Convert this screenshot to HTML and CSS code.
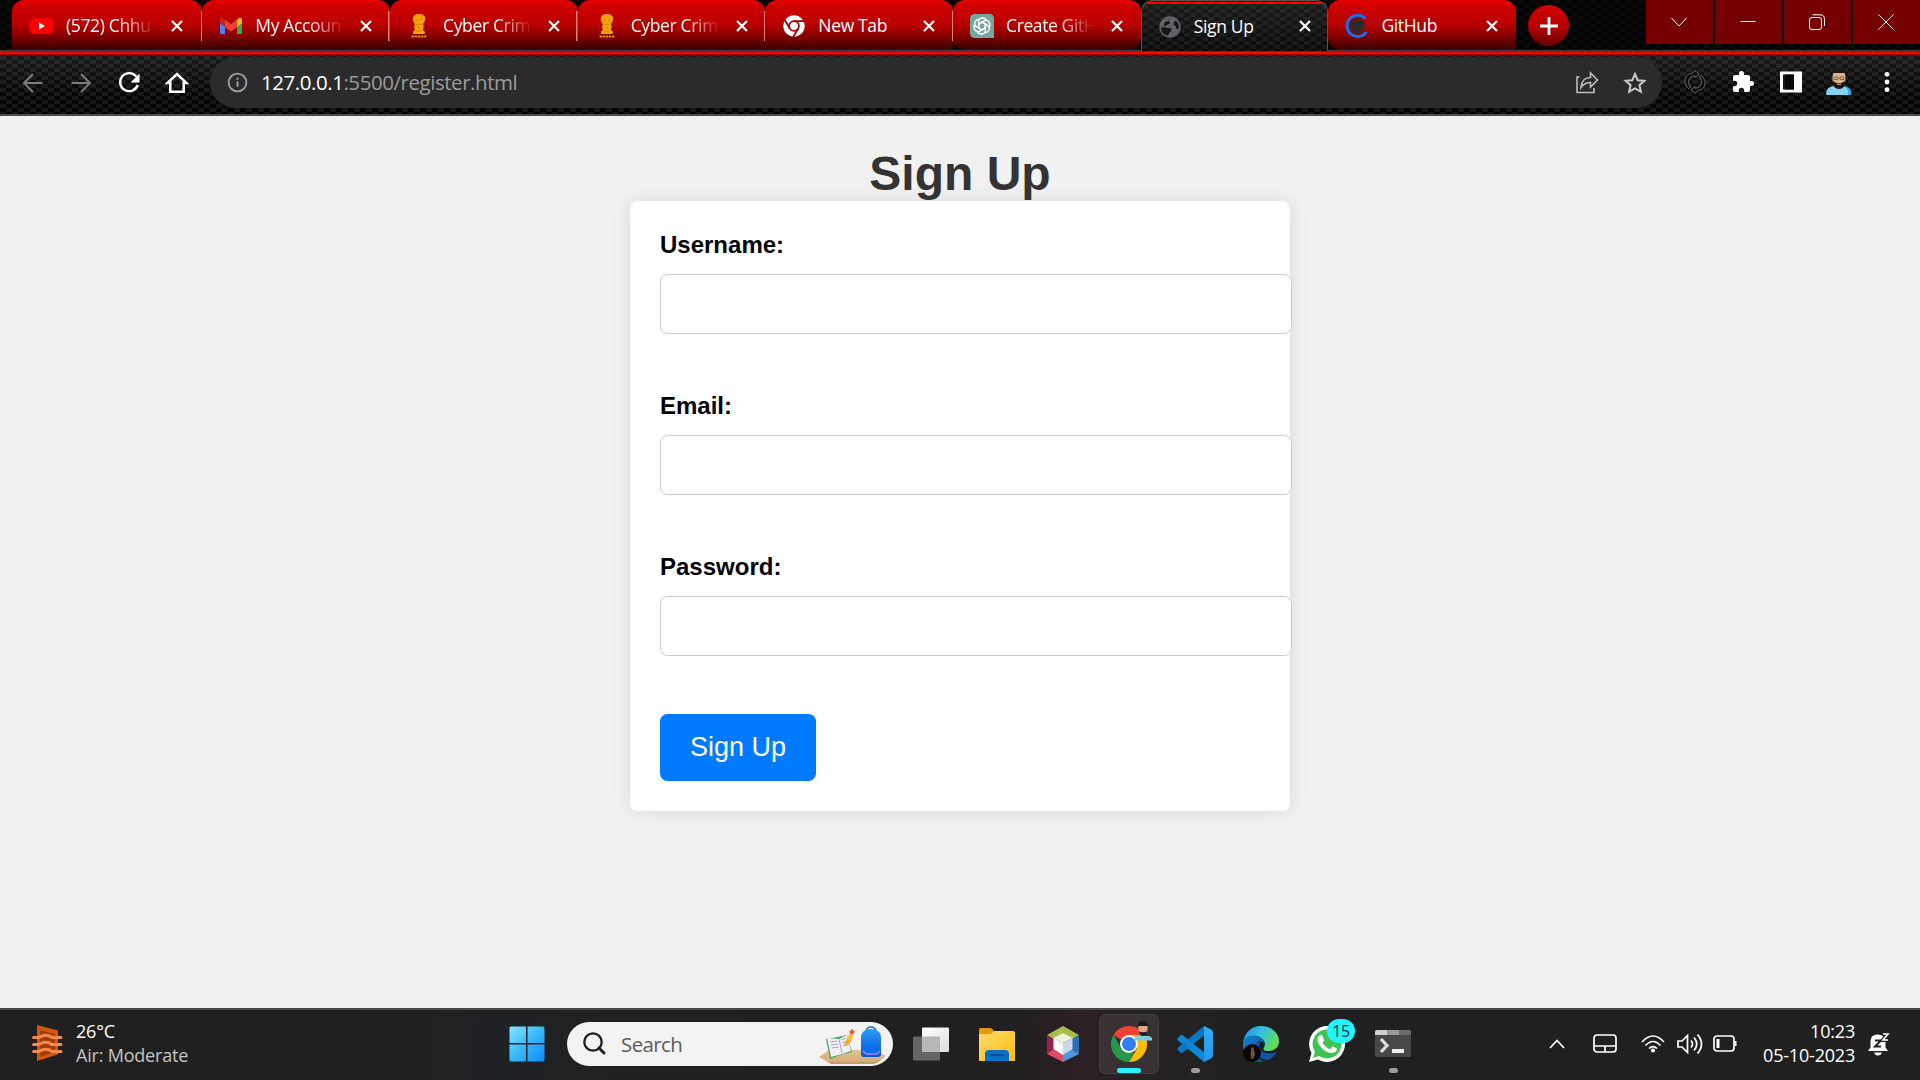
FILE: index.html
```html
<!DOCTYPE html>
<html lang="en">
<head>
<meta charset="utf-8">
<title>Sign Up</title>
<link rel="stylesheet" href="styles.css">
</head>
<body>
<svg class="defs" aria-hidden="true">
  <defs>
    <linearGradient id="win" x1="0" y1="0" x2="1" y2="1"><stop offset="0" stop-color="#8be4ff"/><stop offset=".5" stop-color="#38b8fa"/><stop offset="1" stop-color="#0a8cf8"/></linearGradient>
    <linearGradient id="folder" x1="0" y1="0" x2="1" y2="1"><stop offset="0" stop-color="#ffda6b"/><stop offset="1" stop-color="#fbbc14"/></linearGradient>
    <linearGradient id="edgeTop" x1="0" y1="0" x2="1" y2=".4"><stop offset="0" stop-color="#1a94dc"/><stop offset=".55" stop-color="#35c1e0"/><stop offset="1" stop-color="#60dc5c"/></linearGradient>
    <linearGradient id="edgeLow" x1="0" y1="0" x2="1" y2="1"><stop offset="0" stop-color="#1283d3"/><stop offset="1" stop-color="#104a9c"/></linearGradient>
    <linearGradient id="bag" x1="0" y1="0" x2="0" y2="1"><stop offset="0" stop-color="#2a9bff"/><stop offset="1" stop-color="#0753cf"/></linearGradient>
    <linearGradient id="desk" x1="0" y1="0" x2="0" y2="1"><stop offset="0" stop-color="#e6c190"/><stop offset="1" stop-color="#d5a972"/></linearGradient>
    <linearGradient id="viewFront" x1="0" y1="0" x2="1" y2="1"><stop offset="0" stop-color="#fff"/><stop offset="1" stop-color="#ddd"/></linearGradient>
    <linearGradient id="vsRight" x1="0" y1="0" x2="0" y2="1"><stop offset="0" stop-color="#35acf5"/><stop offset="1" stop-color="#1f97ea"/></linearGradient>
    <symbol id="close" viewBox="0 0 12 12"><path d="M1 1l10 10M11 1L1 11" fill="none" stroke="#fff" stroke-width="2.2"/></symbol>
    <symbol id="emblem" viewBox="0 0 16 24"><path d="M4 1c1-1.200 7-1.200 8 0 2 1 2.500 3 2 5-.3 2-1.500 3-2 4 .8 2 .8 4-.2 6l2 1.500v2.500H2v-2.500l2-1.500c-1-2-1-4-.2-6-.5-1-1.700-2-2-4C1.500 4 2 2 4 1z" fill="#f2a20d"/><path d="M5 5.500l2 1M11 5.500l-2 1M5 10.500h6M6.500 13l3 1.500M5.500 17h5" stroke="#d07a00" stroke-width=".7" fill="none"/><path d="M.5 22.500h15" stroke="#e08a0a" stroke-width="2" stroke-dasharray="2.500 .6"/></symbol>
  </defs>
</svg>

<header class="browser">
  <div class="tabstrip">
    <nav class="tabs">
      <div class="tab tab-first">
        <svg class="tab-icon" viewBox="0 0 24 24"><rect x="0" y="4" width="23" height="16" rx="4" fill="#f00"/><path d="M9 8.500v7l6-3.500z" fill="#fff"/></svg>
        <span class="tab-title fade">(572) Chhu</span><svg class="tab-close"><use href="#close"/></svg>
      </div>
      <div class="tab">
        <svg class="tab-icon" viewBox="0 0 24 24"><path d="M1 6v12.500q0 1.500 1.500 1.500H6V9z" fill="#4285f4"/><path d="M18 9v11h3.500q1.500 0 1.500-1.500V6z" fill="#34a853"/><path d="M18 5.500L20 4q3-1 3 2v3l-5 4z" fill="#fbbc04"/><path d="M6 5.500L4 4Q1 3 1 6v3l5 4z" fill="#c5221f"/><path d="M6 5.500l6 4.700 6-4.700V13l-6 4.500L6 13z" fill="#ea4335"/></svg>
        <span class="tab-title fade">My Accoun</span><svg class="tab-close"><use href="#close"/></svg>
      </div>
      <div class="tab">
        <svg class="tab-icon"><use href="#emblem"/></svg>
        <span class="tab-title fade">Cyber Crim</span><svg class="tab-close"><use href="#close"/></svg>
      </div>
      <div class="tab">
        <svg class="tab-icon"><use href="#emblem"/></svg>
        <span class="tab-title fade">Cyber Crim</span><svg class="tab-close"><use href="#close"/></svg>
      </div>
      <div class="tab">
        <svg class="tab-icon" viewBox="0 0 24 24"><circle cx="12" cy="12" r="10.700" fill="#fff"/><circle cx="12" cy="12" r="4.900" fill="none" stroke="#a00000" stroke-width="1.800"/><path d="M12 7.100h10M7.800 14.500L2.800 6M16.200 14.500l-5 8.500" stroke="#a00000" stroke-width="1.800"/></svg>
        <span class="tab-title">New Tab</span><svg class="tab-close"><use href="#close"/></svg>
      </div>
      <div class="tab tab-plain">
        <svg class="tab-icon" viewBox="0 0 24 24"><path d="M5 0h14q5 0 5 5v19H5q-5 0-5-5V5q0-5 5-5z" fill="#75a99c"/><g fill="none" stroke="#fff" stroke-width="1.400"><path id="petal" d="M12 8.200l3.400 2V16q0 4-4 4-3 0-4-2.500"/><use href="#petal" transform="rotate(60 12 12)"/><use href="#petal" transform="rotate(120 12 12)"/><use href="#petal" transform="rotate(180 12 12)"/><use href="#petal" transform="rotate(240 12 12)"/><use href="#petal" transform="rotate(300 12 12)"/></g></svg>
        <span class="tab-title fade fade-short">Create GitH</span><svg class="tab-close"><use href="#close"/></svg>
      </div>
      <div class="tab tab-active">
        <svg class="tab-icon" viewBox="0 0 24 24"><circle cx="12" cy="12" r="10.700" fill="#5f6368"/><path d="M13 3.500c-3 0-3 2-1.500 3.500S10 9.500 8 10.500s-1 2.500 2 2.500 4.500 1 3 3-2 3-3.500 4.500C5 19.500 3 16 3.200 12.500l4-.5C5 10 6 7 9 6.500s1-2.500 4-3zM15.500 8c0 3 3 2.500 2.500 4.500s2 1.500 3 .5c0-3-1-6-3.500-7.500z" fill="#151515"/></svg>
        <span class="tab-title">Sign Up</span><svg class="tab-close"><use href="#close"/></svg>
      </div>
      <div class="tab tab-plain tab-last">
        <svg class="tab-icon" viewBox="0 0 24 24"><path d="M20.500 4.500A10.700 10.700 0 1 0 21.500 18" fill="none" stroke="#1271f5" stroke-width="2.800"/><path d="M7 5l3 1.500h4L17 5l.5 3.500c2 3 1 7-3.500 7.500v4h-4v-2.500c-2 .5-3-.5-3.500-2 1.500 0 1.500 1.500 3.500 1-.5-.5-5.500-2-3.500-8z" fill="#2b2b2b"/><circle cx="12" cy="12" r="7.200" fill="none" stroke="#35282a" stroke-width="1.500"/></svg>
        <span class="tab-title">GitHub</span><svg class="tab-close"><use href="#close"/></svg>
      </div>
    </nav>
    <button class="new-tab" aria-label="New tab"><svg width="18" height="18" viewBox="0 0 18 18"><path d="M9 0v18M0 9h18" stroke="#fff" stroke-width="2.800"/></svg></button>
    <div class="window-controls">
      <span><svg width="16" height="16" viewBox="0 0 16 16"><path d="M.5 4L8 12l7.500-8"/></svg></span>
      <span><svg width="16" height="16" viewBox="0 0 16 16"><path d="M.5 7.500h15"/></svg></span>
      <span><svg width="16" height="16" viewBox="0 0 16 16"><rect x=".5" y="3.500" width="12" height="12" rx="2.500"/><path d="M3.500 .8H11q4.500 0 4.500 4.500V12"/></svg></span>
      <span><svg width="16" height="16" viewBox="0 0 16 16"><path d="M.5 .5l15 15M15.500 .5l-15 15"/></svg></span>
    </div>
  </div>
  <div class="toolbar">
    <div class="nav-buttons">
      <svg viewBox="0 0 24 24" fill="none" stroke="#7c7c7c" stroke-width="2"><path d="M21.500 12H3M12 3l-9 9 9 9"/></svg>
      <svg viewBox="0 0 24 24" fill="none" stroke="#7c7c7c" stroke-width="2"><path d="M2.500 12H21M12 3l9 9-9 9"/></svg>
      <svg viewBox="0 0 24 24"><path d="M19.200 5.500A9 9 0 1 0 20.700 14" fill="none" stroke="#fff" stroke-width="2.400"/><path d="M22.500 2.500v9h-9z" fill="#fff"/></svg>
      <svg viewBox="0 0 24 24"><path d="M2.500 12L12 3l9.500 9H18.700v8.800H5.300V12z" fill="none" stroke="#fff" stroke-width="2.500"/></svg>
    </div>
    <div class="omnibox">
      <svg class="info" viewBox="0 0 22 22"><circle cx="11" cy="11" r="9.300" fill="none" stroke="#9aa0a6" stroke-width="2"/><path d="M11 10v5.500M11 6v2.200" stroke="#9aa0a6" stroke-width="2"/></svg>
      <span class="url"><b>127.0.0.1</b>:5500/register.html</span>
      <svg class="share" viewBox="0 0 24 24" fill="none" stroke="#bcbcbc" stroke-width="1.600"><path d="M4.500 6H2v15.500h17V17"/><path d="M6 16.500C6.500 10 10 6.500 15.500 6.500V2l7 7-7 7v-4.500c-4 0-7 1.500-9.500 5z"/></svg>
      <svg class="star" viewBox="0 0 24 24" fill="none" stroke="#c8c8c8" stroke-width="2"><path d="M12 3l2.700 6.200 6.700.6-5 4.400 1.500 6.600-5.900-3.500-5.900 3.500 1.500-6.600-5-4.400 6.700-.6z"/></svg>
    </div>
    <div class="extensions">
      <svg viewBox="0 0 24 24" fill="#0b0b0b" stroke="#707070" stroke-width="1"><path d="M8.500 3.800L12 .7l4 3.300-4 3.500V5.800C5.500 6 3.800 13 7.500 17l-1.700 1.700C-1.500 12 2.500 4 8.500 3.800zM15.500 20.200L12 23.300 8 20l4-3.500v1.700c6.500-.2 8.200-7.200 4.500-11.200l1.700-1.700C25.500 12 21.500 20 15.500 20.200z"/></svg>
      <svg viewBox="0 0 24 24"><path d="M20.500 11H19V7q0-2-2-2h-4V3.500a2.500 2.500 0 0 0-5 0V5H4Q2 5 2 7v3.800h1.500a2.700 2.700 0 0 1 0 5.400H2V20q0 2 2 2h3.800v-1.500a2.700 2.700 0 0 1 5.400 0V22H17q2 0 2-2v-4h1.500a2.500 2.500 0 0 0 0-5z" fill="#fff"/></svg>
      <svg viewBox="0 0 24 24"><path d="M1 1.500h22v21H1z" fill="#fff"/><path d="M4 4.500h11v15H4z" fill="#1a1a1a"/><path d="M6 4.500h9v15H6z" fill="#080808"/></svg>
      <svg class="avatar" viewBox="0 0 28 28"><path d="M1.500 27C0 19 8 17.500 14 17.500S28 19 26 27z" fill="#29abe2"/><path d="M1.500 27C0 19 8 17.500 14 17.500s10 2 9 9.500z" fill="#84d1f1"/><path d="M7.500 4h13v9q-1 6-6.500 6t-6.500-6z" fill="#dcb190"/><path d="M6.500 10V4q2-4.500 7.500-4.500T21.500 4v6l-2-5h-11zM7.500 12q2.500 4 6.500 3 4 1 6.500-3l-.5 5q-2 4-6 4t-6-4z" fill="#1e1712"/><path d="M12 16.300h4" stroke="#dcb190"/><path d="M9 9h4v2.500H9zM15 9h4v2.500h-4z" stroke="#685746" fill="none" stroke-width=".8"/></svg>
      <svg viewBox="0 0 24 24" fill="#fff"><circle cx="12" cy="4.300" r="2.400"/><circle cx="12" cy="12" r="2.400"/><circle cx="12" cy="19.700" r="2.400"/></svg>
    </div>
  </div>
</header>

<main class="page">
  <h1>Sign Up</h1>
  <form class="card">
    <label for="username">Username:</label>
    <input id="username" type="text">
    <label for="email">Email:</label>
    <input id="email" type="email">
    <label for="password">Password:</label>
    <input id="password" type="password">
    <button class="submit" type="button">Sign Up</button>
  </form>
</main>

<footer class="taskbar">
  <div class="weather">
    <svg width="32" height="38" viewBox="0 0 32 38"><path d="M6 1l21 5.500v24L6 37z" fill="#d4570f"/><path d="M9 6l15 4v18L9 33z" fill="#a43b08"/><path d="M2.500 13.500H8c5-3 9-3 13 0h9M2.500 20.500H8c5-3 9-3 13 0h9M2.500 27.500H8c5-3 9-3 13 0h9" fill="none" stroke="#f48a4e" stroke-width="3" stroke-linecap="round"/></svg>
    <div class="two-line"><span>26°C</span><span class="muted">Air: Moderate</span></div>
  </div>

  <div class="dock">
    <div class="slot start"><svg width="36" height="36" viewBox="0 0 36 36" fill="url(#win)"><path d="M2 .5h15V17H.5V2Q.5.5 2 .5zM18.500.5H34q1.500 0 1.500 1.500v15h-17zM.5 18.500H17v17H2Q.5 35.500.5 34zM18.500 18.500h17V34q0 1.500-1.500 1.500H18.500z"/></svg></div>
    <div class="search">
      <svg width="24" height="24" viewBox="0 0 24 24"><circle cx="10" cy="10" r="8.700" fill="none" stroke="#202020" stroke-width="2.300"/><path d="M16 16l5 5" stroke="#202020" stroke-width="3" stroke-linecap="round"/></svg>
      <span>Search</span>
      <svg class="search-art" width="68" height="37" viewBox="0 0 68 37"><path d="M0 29l10-7h45l12 6-8 5q-2 2-5 2H12z" fill="url(#desk)"/><path d="M1 30l8 4h47l10-5-8 6-4 1H12z" fill="#c79a6e"/><path d="M7 11l12-2 9-2 5 17-12 3-10 4z" fill="#3fa653"/><path d="M8 10l12 1 8-4 4 16-9 3-11 3z" fill="#f2effa"/><path d="M20 11l3 14M11 14l7-1M12 17l7-1M13 20l7-1M22 12l5-2M23 15l5-2M24 18l5-2" stroke="#aaa4c0" fill="none"/><path d="M25 17l4-8 4 3-5 6z" fill="#f7a823"/><path d="M28 10l3-5 4 3-4 5z" fill="#f7bd3c"/><path d="M30 4l3-3 3 3-3 3z" fill="#ee5548"/><path d="M47 3q1-4 5-4t5 4" fill="none" stroke="#1768d0" stroke-width="1.500"/><path d="M42 26V9q1-8 10-8t10 8v17q0 3-3 3H45q-3 0-3-3z" fill="url(#bag)"/><path d="M44 26v-4q0-6 8-6t8 6v4z" fill="#086ee9"/><path d="M44 23l3 3h11l3-3" fill="none" stroke="#9d87ff" stroke-width="1.500"/></svg>
    </div>
    <div class="slot view"><svg width="36" height="36" viewBox="0 0 36 36"><rect y="10.500" width="27" height="24" rx="1" fill="#656565"/><rect x="9" y="1.500" width="27" height="24.500" rx="1" fill="url(#viewFront)"/><path d="M9 10.500h18V26H9z" fill="#b7b7b7"/></svg></div>
    <div class="slot"><svg width="36" height="36" viewBox="0 0 36 36"><path d="M0 10V4q0-2 2-2h9q2 0 4 3l-2 6z" fill="#e19c08"/><path d="M0 8h12l3-3h19q2 0 2 2v28H0z" fill="url(#folder)"/><path d="M6 35v-7q0-4 4-4h16q4 0 4 4v7z" fill="#0870c7"/><path d="M11 29h14" stroke="#064782" stroke-width="1.500"/></svg></div>
    <div class="slot"><svg width="36" height="36" viewBox="0 0 36 36"><path d="M18 0l16 9-8 5-8-5-8 5-8-5z" fill="#a9bd4d"/><path d="M2 9l8 5v9l-8 5z" fill="#99224d"/><path d="M2 28l7-5 9 5v8z" fill="#e04a69"/><path d="M34 9l-8 5v9l8 5z" fill="#2c6cbd"/><path d="M34 28l-8-5-8 5v8z" fill="#4c99df"/><path d="M18 7l9.500 5L18 17l-9.500-5z" fill="#f1f1dc"/><path d="M8.500 12l9.500 5v12l-9.500-6z" fill="#fff"/><path d="M27.500 12L18 17v12l9.500-6z" fill="#cbd8e8"/></svg></div>
    <div class="slot focused">
      <svg width="36" height="36" viewBox="0 0 36 36"><path d="M18 18L2.400 9A18 18 0 0 1 33.600 9z" fill="#ea4335"/><path d="M18 9h15.600A18 18 0 0 1 18 36l8-13.500z" fill="#fbbc05"/><path d="M2.400 9l8 13.500L18 27h5.200L18 36A18 18 0 0 1 2.400 9z" fill="#279847"/><circle cx="18" cy="18" r="9" fill="#fff"/><circle cx="18" cy="18" r="7" fill="#2f7df4"/></svg>
      <svg class="profile" width="20" height="20" viewBox="0 0 20 20"><path d="M1 19.500q0-4 5-4.500h8q6 0 5 4.500z" fill="#7ccbec"/><path d="M5.500 3h9v7q-1 4-4.500 4t-4.500-4z" fill="#d9aa88"/><path d="M5 5q-.5-5 5-5t5 5zM6 10q2 2 4 1 2 1 4-1 0 5-4 5t-4-5z" fill="#241a15"/></svg>
    </div>
    <div class="slot running"><svg width="36" height="36" viewBox="0 0 36 36"><path d="M.5 12.500l3-3.300q1-.5 2 0L27 26.500V36L1 14.500q-1-1-.5-2z" fill="#0d87d5"/><path d="M.5 23.500l3 3.300q1 .5 2 0L27 9.500V0L1 21.500q-1 1-.5 2z" fill="#0a77c3"/><path d="M5.500 9.200L27 26.500V36L9 19z" fill="#0d87d5"/><path d="M27 0l7 3.500q2 1 2 3v23q0 2-2 3L27 36z" fill="url(#vsRight)"/></svg></div>
    <div class="slot">
      <svg width="36" height="36" viewBox="0 0 36 36"><path d="M0 18C1 7 8 0 18 0s18 7 18 15c0 7-5 10-11 10-4 0-5.500-1.500-4-3.500 2.500-4 0-10-8-11.500C6 9 1 12 0 18z" fill="url(#edgeTop)"/><path d="M0 18C1 11 7 8.500 13 10c5 1 8.500 4 9 8-2-3-6-4-8.500-1-3.500 4-1.500 14 7.500 19C9 38-1 30 0 18z" fill="url(#edgeLow)"/><path d="M13 18c-2 8 4 16 11 16 4-1 8-4 9.500-8-4 2-14 2.500-17-4-1-2-.500-4 1-6-2-.5-4 0-4.500 2z" fill="#1454a8"/><circle cx="9" cy="27" r="9" fill="#0a0606"/><path d="M9 21q2 0 2 3l1 4-2 5H8.500l-1-5 .5-3q-.5-3 1-4z" fill="#735238"/></svg>
    </div>
    <div class="slot">
      <svg width="36" height="36" viewBox="0 0 36 36"><path d="M0 36l2.500-9A18 18 0 1 1 9 33.500z" fill="#fff"/><path d="M4 32l2-6a14.500 14.500 0 1 1 4 4z" fill="#40c351"/><path d="M12 9c2 0 2.500 4 3 5s-2 2-1 3.500c2 3 4 4.500 7 5.500 1 0 2-3 3-2.500l4 2c0 3-3 4.500-5 4.500C16 27 8 19 8.500 13c0-2 2-4 3.500-4z" fill="#fff"/></svg>
      <span class="badge">15</span>
    </div>
    <div class="slot running"><svg width="36" height="36" viewBox="0 0 36 36"><rect y="4" width="36" height="27" rx="2" fill="#484848"/><path d="M0 9V6q0-2 2-2h10v5z" fill="#cfcfcf"/><path d="M12 4h12v5H12z" fill="#999"/><path d="M24 4h10q2 0 2 2v3H24z" fill="#6c6c6c"/><path d="M6 13l6 6.500L6 26" fill="none" stroke="#ddd" stroke-width="3.200"/><path d="M17 23h12v4H17z" fill="#eee"/></svg></div>
  </div>

  <div class="tray">
    <svg class="chevron" width="16" height="16" viewBox="0 0 16 16"><path d="M1 12l7-7.500 7 7.500"/></svg>
    <svg class="touchpad" width="24" height="20" viewBox="0 0 24 20"><rect x="1" y="1" width="22" height="17" rx="3"/><path d="M1 12h22M12 12v6"/></svg>
    <svg class="wifi" width="24" height="20" viewBox="0 0 24 20"><path d="M1 8q11-12 22 0M4.500 11.500q7.500-8 15 0M8 14.500q4-4 8 0"/><circle cx="12" cy="16.500" r="1.200" fill="#fff"/></svg>
    <svg class="volume" width="26" height="22" viewBox="0 0 26 22"><path d="M1 8h4l5.500-5.500v17L5 14H1zM14 7.500q3 3.500 0 7M17 4.500q5.500 6.500 0 13M20.500 1.500q8 9.500 0 19"/></svg>
    <svg class="battery" width="25" height="18" viewBox="0 0 25 18"><rect x="1" y="1" width="20" height="15" rx="3"/><path d="M5 4v9" stroke-width="3"/><path d="M21 6h2.500v5H21z" fill="#fff" stroke="none"/></svg>
    <div class="two-line clock"><span>10:23</span><span>05-10-2023</span></div>
    <svg class="bell" width="22" height="25" viewBox="0 0 22 25"><path d="M0 19l2.500-3.500V9.500q0-7 7-7 8 0 8 8v5L20 19zM6 20.500h8q-1 3-4 3t-4-3z" fill="#fff" stroke="none"/><path d="M7 8.500h6l-6 6h6" stroke="#222" stroke-width="2"/><path d="M15 2h5l-5 6h5" stroke="#202020" stroke-width="4"/><path d="M15 2h5l-5 6h5" stroke-width="1.600"/></svg>
  </div>
</footer>
</body>
</html>
```
FILE: styles.css
```css
* { box-sizing: border-box; }

body {
  margin: 0;
  width: 1920px;
  height: 1080px;
  display: flex;
  flex-direction: column;
  overflow: hidden;
  background: #f1f1f1;
  font-family: "Open Sans", "Noto Sans", sans-serif;
}

svg { display: block; flex: none; }
.defs { position: absolute; width: 0; height: 0; }

/* Browser frame */
.browser { flex: none; height: 116px; }

.tabstrip {
  display: flex;
  align-items: flex-start;
  height: 54px;
  padding-left: 12px;
  border-bottom: 2px solid #f00;
  background:
    linear-gradient(#444 1px, #b80000 0) 0 50px / 100% 2px no-repeat,
    conic-gradient(#0a0a0a 25%, #030303 0 50%, #0a0a0a 0 75%, #030303 0) 0 0 / 12px 8px;
}

.tabs { display: flex; }

.tab {
  display: flex;
  align-items: center;
  width: 187.700px;
  height: 50px;
  padding-left: 17px;
  border-radius: 12px 12px 0 0;
  background:
    linear-gradient(#e48080, #e48080) right 11px / 1.500px 30px no-repeat,
    linear-gradient(#e60000 0, #cf0000 12%, #b80000 50%, #860000 72%, #4b0000 92%, #3e0000);
}
.tab-first { width: 190.300px; padding-left: 18px; }
.tab-plain { border-radius: 12px; background: linear-gradient(#e60000 0, #cf0000 12%, #b80000 50%, #860000 72%, #4b0000 92%, #3e0000); }
.tab-last { width: 188px; border-radius: 12px 12px 0 12px; }
.tab-active {
  height: 51px;
  margin-bottom: -1px;
  border: solid #555;
  border-width: 1px 1px 0;
  padding: 0 0 1px 16px;
  background:
    linear-gradient(#f00, #f00) 0 1px / 100% 2px no-repeat,
    linear-gradient(rgba(255,255,255,.08), transparent),
    conic-gradient(#181818 25%, #0a0a0a 0 50%, #181818 0 75%, #0a0a0a 0) 0 0 / 12px 8px;
}
.tab-icon { width: 24px; height: 24px; margin-top: 2px; }
.tab-title {
  width: 89px;
  margin-left: 12px;
  overflow: hidden;
  color: #fff;
  font-size: 17.500px;
  line-height: 24px;
  letter-spacing: -.35px;
  white-space: nowrap;
}
.fade { -webkit-mask-image: linear-gradient(90deg, #000 60%, rgba(0,0,0,.1) 96%); mask-image: linear-gradient(90deg, #000 60%, rgba(0,0,0,.1) 96%); }
.fade-short { width: 87px; margin-right: 2px; letter-spacing: -.4px; }
.tab-close { width: 12px; height: 12px; margin: 1px 0 0 16px; }

.new-tab {
  display: grid;
  place-items: center;
  width: 41px;
  height: 41px;
  margin: 5px 0 0 12px;
  padding: 0;
  border: 0;
  border-radius: 50%;
  background: linear-gradient(#cf0000, #b50000 55%, #650000);
}

.window-controls { display: flex; gap: 2px; margin-left: auto; }
.window-controls span { display: grid; place-items: center; width: 67px; height: 44px; padding: 0 2px 1px 0; background: #740000; }
.window-controls svg { fill: none; stroke: #fff; stroke-width: 1; }

.toolbar {
  display: flex;
  align-items: center;
  height: 62px;
  padding: 0 9px 2px;
  border-bottom: 2px solid #4b4b4b;
  background:
    linear-gradient(#900000, #900000) 0 0 / 100% 1px no-repeat,
    linear-gradient(rgba(255,255,255,.09), transparent 75%),
    conic-gradient(#171717 25%, #040404 0 50%, #171717 0 75%, #040404 0) 0 6px / 12px 8px;
}
.nav-buttons, .extensions { display: flex; }
.nav-buttons svg, .extensions svg { width: 24px; height: 24px; margin: 0 12px; }
.extensions .avatar { width: 28px; height: 28px; margin: -2px 10px 0; }

.omnibox {
  display: flex;
  align-items: center;
  width: 1452px;
  height: 51px;
  margin: -2px 9px 0;
  padding: 1px 15px 0 17px;
  border-radius: 26px;
  background: #2b2b2b;
}
.info { width: 21px; height: 21px; }
.url { flex: 1; margin-left: 13px; padding-bottom: 1px; color: #9b9b9b; font-size: 20.500px; letter-spacing: -.45px; line-height: 28px; }
.url b { color: #fff; font-weight: 400; }
.star { width: 24px; height: 24px; }
.share { width: 24px; height: 24px; margin-right: 24px; }

/* Sign-up page */
.page {
  flex: 1;
  padding-top: 30px;
  font-family: "Liberation Sans", Arial, sans-serif;
}
.page h1 { margin: 0; color: #333; font-size: 48px; line-height: 55px; text-align: center; }
.card {
  width: 660px;
  height: 610px;
  margin: 0 auto;
  padding: 30px;
  border-radius: 7.500px;
  background: #fff;
  box-shadow: 0 0 18px rgba(0,0,0,.1);
}
.card label { display: block; margin-bottom: 16px; color: #000; font-size: 24px; font-weight: 700; line-height: 27px; }
.card input { display: block; width: 632px; height: 60px; margin: 0 0 58px; border: 1px solid #ccc; border-radius: 7.500px; background: #fff; }
.submit { width: 156px; height: 67px; padding: 0; border: 0; border-radius: 7.500px; background: #007bff; color: #fff; font: 27px "Liberation Sans", Arial, sans-serif; }

/* Taskbar */
.taskbar {
  flex: none;
  display: flex;
  height: 72px;
  border-top: 2px solid #484848;
  background: linear-gradient(90deg, #202020 18%, #1f2224 26%, #202020 40%, #202020 53%, #2c2024 56%, #242122 61%, #202020 66%, #1f2021 70%, #202020);
  color: #fff;
}
.two-line { display: flex; flex-direction: column; font-size: 18px; line-height: 24px; letter-spacing: -.2px; white-space: nowrap; }
.weather { display: flex; width: 494px; padding: 9px 0 0 31px; }
.weather svg { margin-top: 5px; }
.weather .two-line { margin-left: 13px; }
.muted { color: #c5c5c5; }

.dock { display: flex; align-items: center; height: 68px; }
.slot { position: relative; display: grid; place-items: center; width: 66px; height: 60px; }
.slot::before { content: ""; position: absolute; }
.search {
  display: flex;
  align-items: center;
  width: 326px;
  height: 44px;
  margin: 0 5px 0 7px;
  padding-left: 16px;
  border-radius: 22px;
  background: #f3f3f3;
  color: #5c5c5c;
  font-size: 20.500px;
  letter-spacing: -.6px;
}
.search span { flex: 1; margin-left: 14px; }
.search-art { margin: 5px 6px 0 0; overflow: visible; }
.focused { width: 60px; margin: 0 3px; border-radius: 7px; background: rgba(255,255,255,.08); box-shadow: inset 0 0 0 1px rgba(255,255,255,.06); }
.focused::before { left: 18px; bottom: 1px; width: 24px; height: 5px; border-radius: 3px; background: #2cf0ff; }
.running::before { left: 29px; bottom: 1px; width: 9px; height: 5px; border-radius: 3px; background: #9b9b9b; }
.profile { position: absolute; left: 34px; top: 7px; }
.badge {
  position: absolute;
  left: 33px;
  top: 5px;
  width: 28px;
  height: 24px;
  border-radius: 12px;
  background: #22f5ff;
  color: #063236;
  font-size: 16px;
  line-height: 24px;
  letter-spacing: -.5px;
  text-align: center;
}

.tray { display: flex; align-items: center; height: 68px; flex: 1; padding-left: 123px; }
.tray svg { fill: none; stroke: #fff; stroke-width: 1.700; }
.touchpad { margin-left: 28px; }
.wifi { margin-left: 24px; }
.volume { margin-left: 12px; }
.battery { margin-left: 10px; }
.clock { flex: 1; align-items: flex-end; margin-top: -2px; letter-spacing: -.2px; }
.bell { margin: 0 30px 0 13px; }
```
